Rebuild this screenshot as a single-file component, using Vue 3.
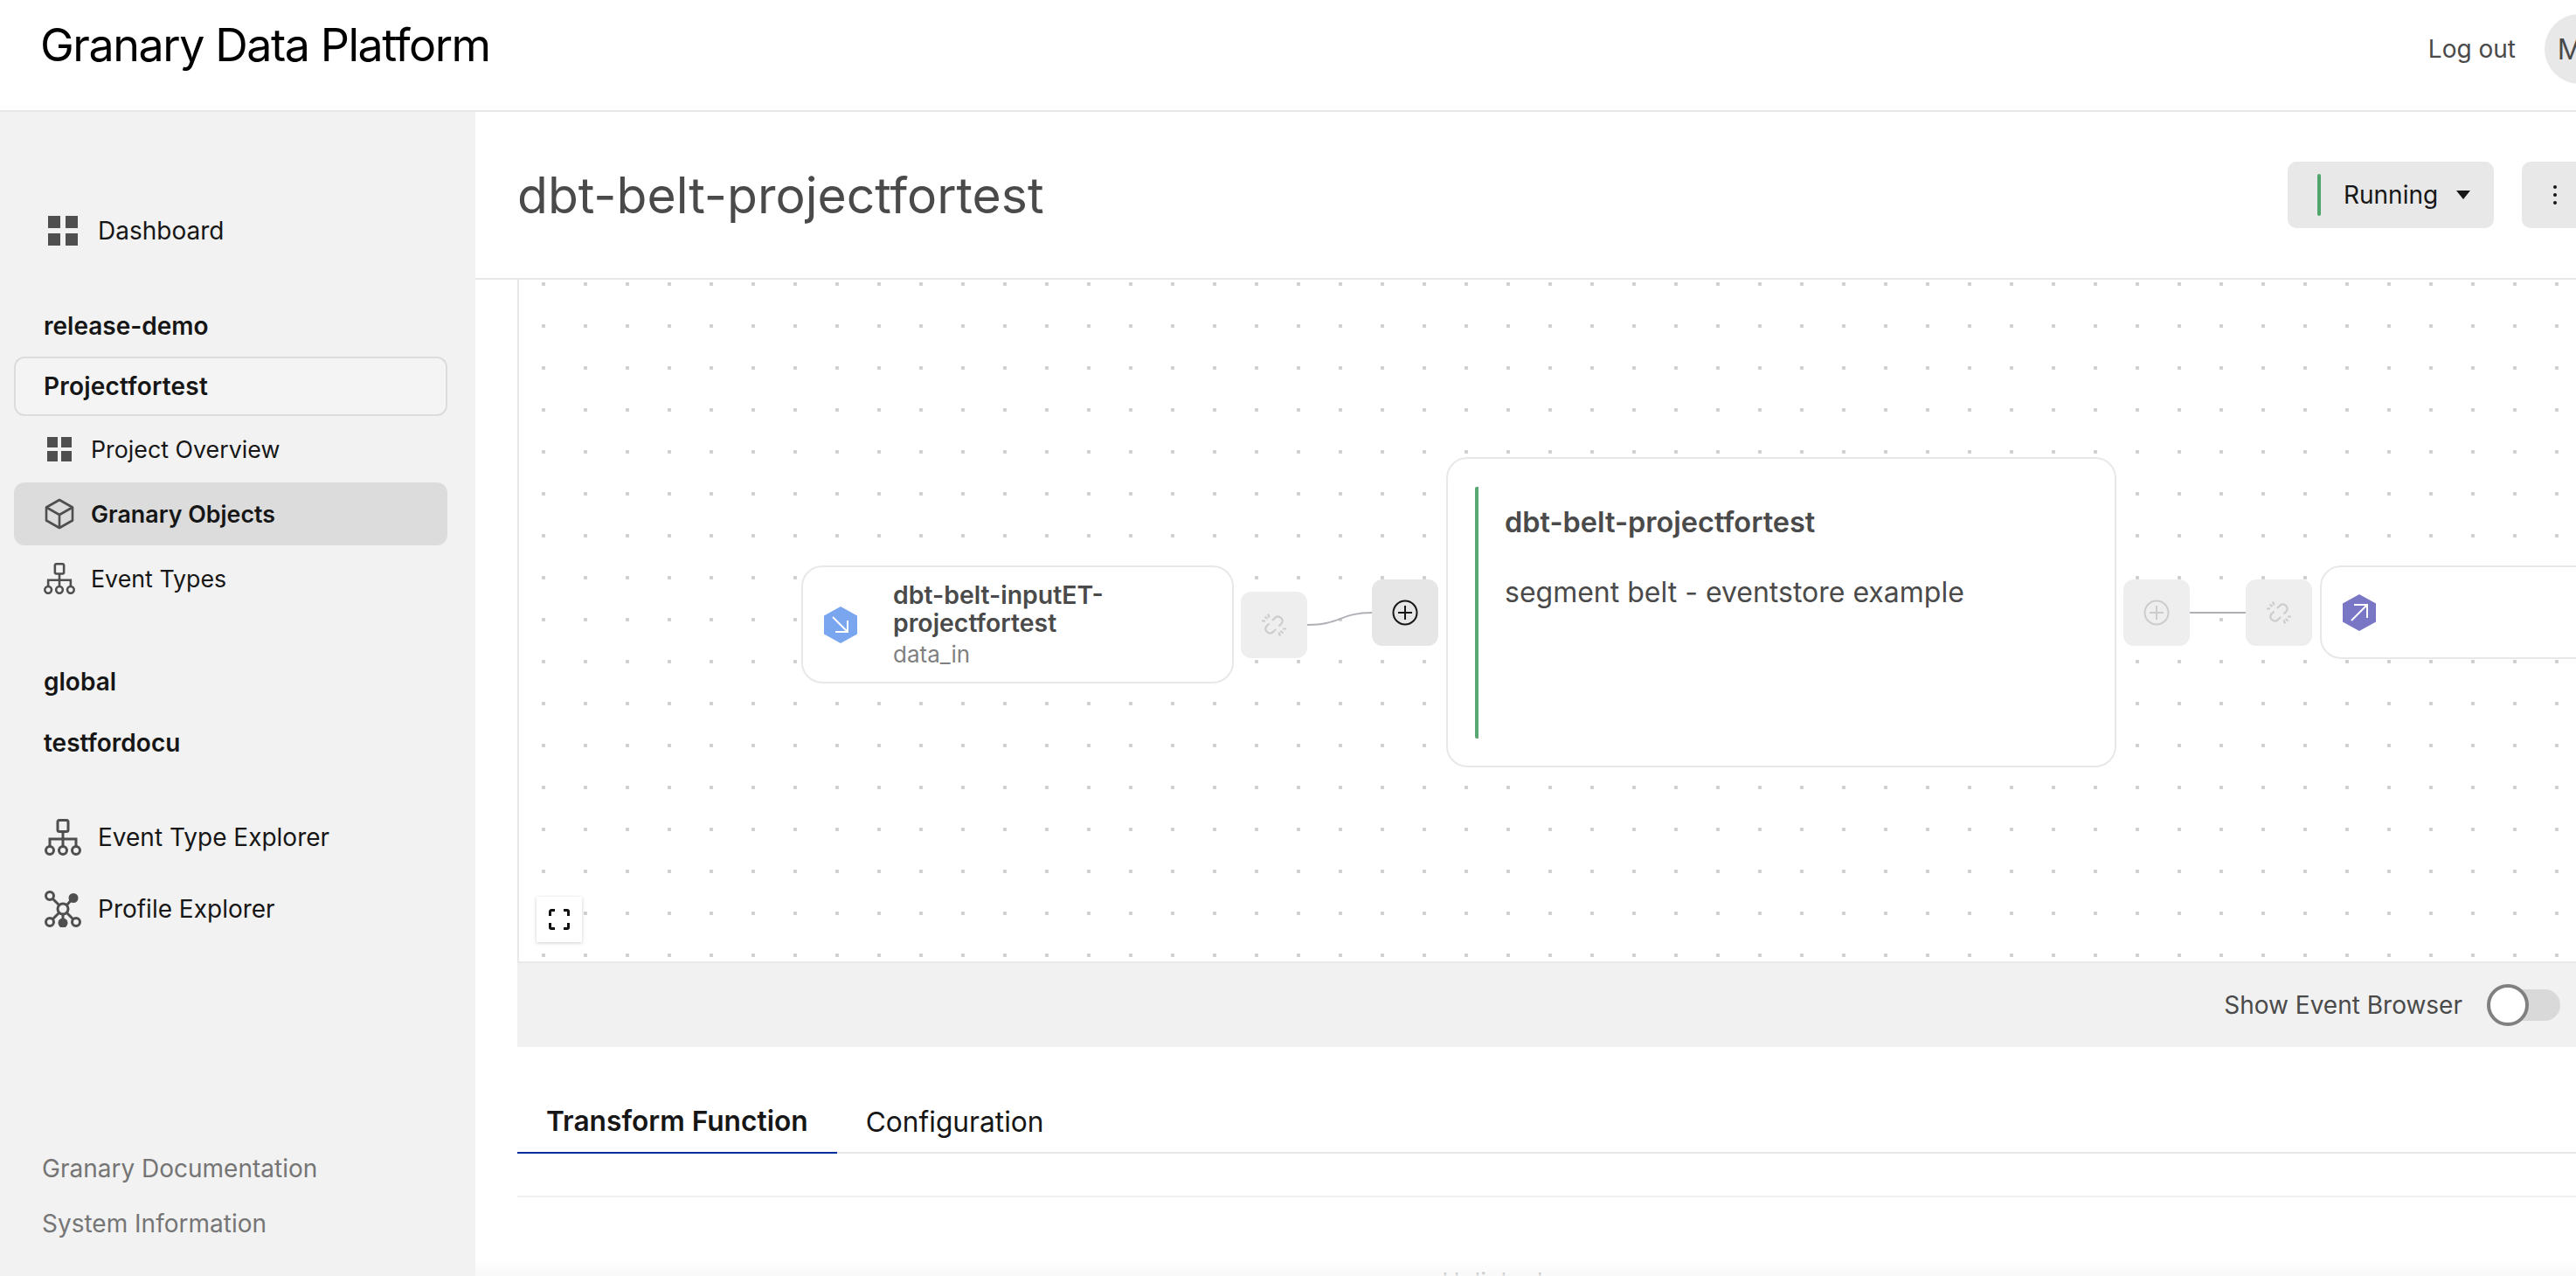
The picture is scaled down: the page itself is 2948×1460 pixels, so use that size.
<script setup>
import { ref } from 'vue'

const showBrowser = ref(false)
const activeTab = ref('transform')
</script>

<template>
  <div class="page">
    <header class="topbar">
      <h1 class="brand">Granary Data Platform</h1>
      <div class="user">
        <span class="logout">Log out</span>
        <span class="avatar">MK</span>
      </div>
    </header>

    <div class="body-row">
      <aside class="sidebar">
        <a class="big-row">
          <svg class="big-icon" viewBox="0 0 42 42"><path fill="#4f4f4f" d="M4 4h14v14H4zM24 4h14v14H24zM4 24h14v14H4zM24 24h14v14H24z"/></svg>
          Dashboard
        </a>

        <div class="group first">release-demo</div>
        <div class="project">Projectfortest</div>
        <nav class="subnav">
          <a class="sub-row">
            <svg class="sub-icon" viewBox="0 0 36 36"><path fill="#4f4f4f" d="M4 4h12v12H4zM20 4h12v12H20zM4 20h12v12H4zM20 20h12v12H20z"/></svg>
            Project Overview
          </a>
          <a class="sub-row active">
            <svg class="sub-icon" viewBox="0 0 36 36" fill="none" stroke="#4f4f4f" stroke-width="2.6" stroke-linejoin="round"><path d="M18 2 33 10.500V25.500L18 34 3 25.500V10.500Z"/><path d="M3 10.500 18 19 33 10.500M18 19V34"/></svg>
            Granary Objects
          </a>
          <a class="sub-row">
            <svg class="sub-icon" viewBox="0 0 42 42" fill="none" stroke="#4f4f4f" stroke-width="3"><rect x="15" y="1.500" width="12" height="13" rx="2"/><path d="M21 14.500V31M6 31.500V23H36V31.500"/><circle cx="6" cy="36" r="4.500"/><circle cx="21" cy="36" r="4.500"/><circle cx="36" cy="36" r="4.500"/></svg>
            Event Types
          </a>
        </nav>

        <div class="group spaced">global</div>
        <div class="group">testfordocu</div>

        <a class="big-row explorer">
          <svg class="big-icon" viewBox="0 0 42 42" fill="none" stroke="#4f4f4f" stroke-width="3"><rect x="15" y="1.500" width="12" height="13" rx="2"/><path d="M21 14.500V31M6 31.500V23H36V31.500"/><circle cx="6" cy="36" r="4.500"/><circle cx="21" cy="36" r="4.500"/><circle cx="36" cy="36" r="4.500"/></svg>
          Event Type Explorer
        </a>
        <a class="big-row">
          <svg class="big-icon" viewBox="0 0 42 42" fill="none" stroke="#4f4f4f" stroke-width="3"><circle cx="21" cy="21" r="6"/><circle cx="6" cy="6" r="4.500"/><circle cx="33" cy="8.500" r="4" fill="#4f4f4f"/><circle cx="6" cy="36" r="4.500"/><circle cx="21" cy="37" r="4" fill="#4f4f4f"/><circle cx="36" cy="36" r="4.500"/><path d="M9.500 9.500 16.500 16.500M25.500 16.500 30 11.500M16.500 25.500 9.500 32.500M21 27V33M25.500 25.500 32.500 32.500"/></svg>
          Profile Explorer
        </a>

        <div class="foot-links">
          <a>Granary Documentation</a>
          <a>System Information</a>
        </div>
      </aside>

      <main class="content">
        <div class="title-row">
          <h2 class="page-title">dbt-belt-projectfortest</h2>
          <div class="title-actions">
            <button class="status-btn">
              <span class="status-bar"></span>
              Running
              <span class="caret"></span>
            </button>
            <button class="more-btn"><span></span><span></span><span></span></button>
          </div>
        </div>

        <section class="canvas">
          <svg class="edges" width="2420" height="780" fill="none" stroke="#b1afb5" stroke-width="2">
            <path d="M902 395C940 395 940 381 976 381"/>
            <path d="M1912 381H1976"/>
          </svg>

          <div class="node input-node">
            <svg class="hex" viewBox="0 0 38 42"><path fill="#7aa6ef" d="M19 0 38 10.500V31.500L19 42 0 31.500V10.500Z"/><path fill="none" stroke="#fff" stroke-width="2" d="M10 12 27 29M13 29H27V16"/></svg>
            <div>
              <div class="node-title">dbt-belt-inputET-<br>projectfortest</div>
              <div class="node-sub">data_in</div>
            </div>
          </div>

          <div class="port link-one">
            <svg class="link-icon" viewBox="0 0 30 30" fill="none" stroke="#cccccc" stroke-width="2.200"><path d="M13 10 16.500 6.500A5 5 0 0 1 23.500 13.500L20.500 16.500M17 20 13.500 23.500A5 5 0 0 1 6.500 16.500L9.500 13.500"/><path d="M8 2.500 9.500 6.500M4.500 5.500 7.500 8M1 10.500H5M22 27.500 20.500 23.500M25.500 24.500 22.500 22M29 19.500H25"/></svg>
          </div>
          <div class="port plus-one dark">
            <svg class="plus-icon" viewBox="0 0 30 30" fill="none" stroke="#161616" stroke-width="2"><circle cx="15" cy="15" r="13.500"/><path d="M15 7V23M7 15H23"/></svg>
          </div>

          <div class="node main-node">
            <div class="main-inner">
              <div class="main-title">dbt-belt-projectfortest</div>
              <div class="main-sub">segment belt - eventstore example</div>
            </div>
          </div>

          <div class="port plus-two">
            <svg class="plus-icon" viewBox="0 0 30 30" fill="none" stroke="#cccccc" stroke-width="2"><circle cx="15" cy="15" r="13.500"/><path d="M15 7V23M7 15H23"/></svg>
          </div>
          <div class="port link-two">
            <svg class="link-icon" viewBox="0 0 30 30" fill="none" stroke="#cccccc" stroke-width="2.200"><path d="M13 10 16.500 6.500A5 5 0 0 1 23.500 13.500L20.500 16.500M17 20 13.500 23.500A5 5 0 0 1 6.500 16.500L9.500 13.500"/><path d="M8 2.500 9.500 6.500M4.500 5.500 7.500 8M1 10.500H5M22 27.500 20.500 23.500M25.500 24.500 22.500 22M29 19.500H25"/></svg>
          </div>

          <div class="node output-node">
            <svg class="hex" viewBox="0 0 38 42"><path fill="#7a76c6" d="M19 0 38 10.500V31.500L19 42 0 31.500V10.500Z"/><path fill="none" stroke="#fff" stroke-width="2" d="M10 30 28 12M13 12H28V27"/></svg>
          </div>

          <button class="fit-btn">
            <svg width="24" height="24" viewBox="0 0 24 24" fill="none" stroke="#111" stroke-width="3"><path d="M1.500 8V3A1.500 1.500 0 0 1 3 1.500H7M17 1.500H21A1.500 1.500 0 0 1 22.500 3V8M22.500 16V21A1.500 1.500 0 0 1 21 22.500H17M7 22.500H3A1.500 1.500 0 0 1 1.500 21V16"/></svg>
          </button>
        </section>

        <div class="browser-bar">
          <span>Show Event Browser</span>
          <button class="toggle" :class="{ on: showBrowser }" @click="showBrowser = !showBrowser"><span class="knob"></span></button>
        </div>

        <div class="tabs">
          <button class="tab" :class="{ selected: activeTab === 'transform' }" @click="activeTab = 'transform'">Transform Function</button>
          <button class="tab" :class="{ selected: activeTab === 'config' }" @click="activeTab = 'config'">Configuration</button>
        </div>
        <div class="tab-body">
          <div class="peek">Unlinked</div>
        </div>
        <div class="fade"></div>
      </main>
    </div>
  </div>
</template>

<style>
html, body {
  overflow: hidden;
  height: 100%;
  background: #fff;
}
</style>

<style scoped>
.page {
  width: 3014px;
  height: 1460px;
  display: flex;
  flex-direction: column;
  font-family: Inter, "Noto Sans", sans-serif;
  color: #161616;
}

.topbar {
  flex: none;
  height: 128px;
  box-sizing: border-box;
  border-bottom: 2px solid #e8e8e8;
  display: flex;
  justify-content: space-between;
  padding: 0 22px 14px 46px;
  align-items: center;
}

.brand {
  margin: -10px 0 0;
  font-size: 52px;
  font-weight: 400;
  color: #000;
  letter-spacing: -1.45px;
}

.user {
  display: flex;
  align-items: center;
  gap: 33px;
}

.logout {
  font-size: 28px;
  color: #4a4a4a;
}

.avatar {
  width: 80px;
  height: 80px;
  border-radius: 50%;
  background: #e8e8e8;
  color: #4a4a4a;
  font-size: 32px;
  display: flex;
  align-items: center;
  justify-content: center;
}

.body-row {
  flex: 1;
  display: flex;
  min-height: 0;
}

.sidebar {
  flex: none;
  width: 544px;
  box-sizing: border-box;
  background: #f2f2f2;
  padding-top: 95px;
  display: flex;
  flex-direction: column;
  font-size: 28px;
}

.big-row {
  height: 82px;
  display: flex;
  align-items: center;
  gap: 19px;
  padding-left: 51px;
  flex: none;
}

.big-row.explorer {
  margin-top: 32px;
}

.big-icon {
  width: 42px;
  height: 42px;
  flex: none;
}

.group {
  height: 70px;
  flex: none;
  line-height: 70px;
  padding-left: 50px;
  font-weight: 600;
}

.group.first {
  margin-top: 33px;
}

.group.spaced {
  margin-top: 47px;
}

.project {
  flex: none;
  height: 68px;
  box-sizing: border-box;
  margin: 0 32px 0 16px;
  padding-left: 32px;
  border: 2px solid #dcdcdc;
  border-radius: 12px;
  background: #f4f4f4;
  font-weight: 600;
  line-height: 65px;
  letter-spacing: 0.2px;
}

.subnav {
  margin-top: 2px;
  display: flex;
  flex-direction: column;
  gap: 2px;
  font-size: 26.8px;
}

.sub-row {
  height: 72px;
  margin: 0 32px 0 16px;
  padding-left: 34px;
  display: flex;
  align-items: center;
  gap: 18px;
  border-radius: 12px;
}

.sub-row.active {
  background: #dcdcdc;
  font-weight: 600;
}

.sub-icon {
  width: 36px;
  height: 36px;
  flex: none;
}

.foot-links {
  margin-top: auto;
  padding: 0 0 28px 48px;
  display: flex;
  flex-direction: column;
  color: #757575;
}

.foot-links a {
  line-height: 63px;
}

.content {
  flex: none;
  width: 2470px;
  position: relative;
  overflow: hidden;
}

.title-row {
  height: 192px;
  box-sizing: border-box;
  border-bottom: 2px solid #e8e8e8;
  padding: 0 52px 0 48px;
  display: flex;
  justify-content: space-between;
  align-items: center;
}

.page-title {
  margin: 0;
  font-size: 57px;
  font-weight: 400;
  color: #4a4a4a;
}

.title-actions {
  display: flex;
  gap: 32px;
}

.status-btn,
.more-btn {
  height: 76px;
  border: none;
  border-radius: 10px;
  background: #e8e8e8;
  font: inherit;
  color: #161616;
}

.status-btn {
  width: 236px;
  padding: 0 30px 0 34px;
  display: flex;
  align-items: center;
  font-size: 28px;
}

.status-bar {
  flex: none;
  width: 4px;
  height: 48px;
  border-radius: 2px;
  background: #4fa56b;
  margin-right: 26px;
}

.caret {
  margin-left: 21px;
  border-left: 8px solid transparent;
  border-right: 8px solid transparent;
  border-top: 10px solid #161616;
}

.more-btn {
  width: 76px;
  display: flex;
  flex-direction: column;
  align-items: center;
  justify-content: center;
  gap: 5px;
}

.more-btn span {
  width: 4px;
  height: 4px;
  border-radius: 50%;
  background: #161616;
}

.canvas {
  position: relative;
  margin-left: 48px;
  height: 782px;
  box-sizing: border-box;
  border-left: 2px solid #e8e8e8;
  border-bottom: 2px solid #e8e8e8;
  background-image: radial-gradient(circle at 24px 24px, #cfcfcf 2px, transparent 2.5px);
  background-size: 48px 48px;
  background-position: 4px -19px;
}

.edges {
  position: absolute;
  left: 0;
  top: 0;
}

.node {
  position: absolute;
  box-sizing: border-box;
  border: 2px solid #e8e8e8;
  border-radius: 24px;
  background: #fff;
}

.input-node {
  left: 323px;
  top: 327px;
  width: 495px;
  height: 135px;
  display: flex;
  align-items: center;
  gap: 41px;
  padding-left: 24px;
}

.output-node {
  left: 2061px;
  top: 327px;
  width: 500px;
  height: 107px;
  display: flex;
  align-items: center;
  padding-left: 24px;
}

.hex {
  width: 38px;
  height: 42px;
  flex: none;
}

.node-title {
  font-size: 28.4px;
  line-height: 32px;
  font-weight: 600;
  color: #4a4a4a;
}

.node-sub {
  margin-top: 4px;
  font-size: 26px;
  line-height: 32px;
  color: #808080;
}

.main-node {
  left: 1061px;
  top: 203px;
  width: 767px;
  height: 355px;
  padding: 32px 0 0 31px;
}

.main-inner {
  height: 288px;
  box-sizing: border-box;
  border-left: 4px solid #5aa874;
  border-radius: 2px;
  padding: 21px 0 0 30px;
}

.main-title {
  font-size: 32.5px;
  line-height: 40px;
  font-weight: 600;
  color: #4a4a4a;
}

.main-sub {
  margin-top: 40px;
  font-size: 32px;
  line-height: 40px;
  color: #4a4a4a;
}

.port {
  position: absolute;
  width: 76px;
  height: 76px;
  border-radius: 12px;
  background: #eeeeee;
  display: flex;
  align-items: center;
  justify-content: center;
}

.port.dark {
  background: #e6e6e6;
}

.link-one { left: 826px; top: 357px; }
.plus-one { left: 976px; top: 343px; }
.plus-two { left: 1836px; top: 343px; }
.link-two { left: 1976px; top: 343px; }

.link-icon {
  width: 30px;
  height: 30px;
}

.plus-icon {
  width: 30px;
  height: 30px;
}

.fit-btn {
  position: absolute;
  left: 20px;
  top: 706px;
  width: 52px;
  height: 52px;
  padding: 0;
  border: none;
  background: #fff;
  box-shadow: 0 1px 4px rgba(0, 0, 0, 0.2);
  display: flex;
  align-items: center;
  justify-content: center;
}

.browser-bar {
  margin-left: 48px;
  height: 96px;
  box-sizing: border-box;
  background: #f1f1f1;
  padding-right: 84px;
  display: flex;
  align-items: center;
  justify-content: flex-end;
  gap: 28px;
  font-size: 28px;
  color: #4a4a4a;
}

.toggle {
  position: relative;
  width: 84px;
  height: 36px;
  padding: 0;
  border: none;
  border-radius: 18px;
  background: #d9d9d9;
}

.knob {
  position: absolute;
  left: 0;
  top: -6px;
  width: 48px;
  height: 48px;
  box-sizing: border-box;
  border: 4px solid #808080;
  border-radius: 50%;
  background: #fff;
}

.toggle.on .knob {
  left: 36px;
}

.tabs {
  margin: 50px 0 0 48px;
  height: 72px;
  box-sizing: border-box;
  border-bottom: 2px solid #e8e8e8;
  display: flex;
}

.tab {
  height: 72px;
  padding: 0 33px 2px;
  border: none;
  background: none;
  font: inherit;
  font-size: 31.7px;
  color: #161616;
}

.tab.selected {
  font-weight: 600;
  border-bottom: 2px solid #002d9c;
}

.tab-body {
  margin: 48px 0 0 48px;
  border-top: 2px solid #f0f0f0;
  font-size: 28px;
  line-height: 40px;
  color: #4a4a4a;
}

.peek {
  margin: 77px 0 0 1058px;
}

.fade {
  position: absolute;
  left: 0;
  right: 0;
  bottom: 0;
  height: 20px;
  background: linear-gradient(rgba(248, 248, 248, 0), rgba(248, 248, 248, 0.9));
}
</style>
